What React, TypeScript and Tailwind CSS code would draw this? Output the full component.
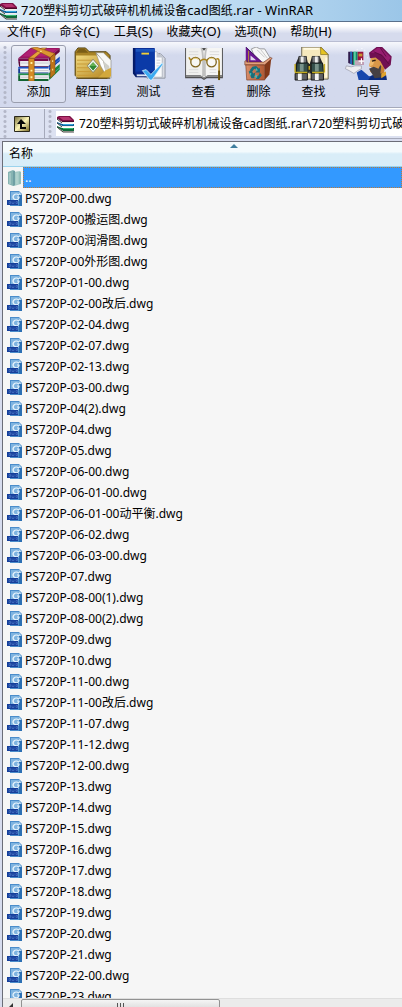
import { Fragment } from "react";

const FOLDER = "720塑料剪切式破碎机机械设备cad图纸";

const files = [
  "00",
  "00搬运图",
  "00润滑图",
  "00外形图",
  "01-00",
  "02-00改后",
  "02-04",
  "02-07",
  "02-13",
  "03-00",
  "04(2)",
  "04",
  "05",
  "06-00",
  "06-01-00",
  "06-01-00动平衡",
  "06-02",
  "06-03-00",
  "07",
  "08-00(1)",
  "08-00(2)",
  "09",
  "10",
  "11-00",
  "11-00改后",
  "11-07",
  "11-12",
  "12-00",
  "13",
  "14",
  "15",
  "16",
  "17",
  "18",
  "19",
  "20",
  "21",
  "22-00",
  "23",
].map((n) => `PS720P-${n}.dwg`);

const menus = ["文件(F)", "命令(C)", "工具(S)", "收藏夹(O)", "选项(N)", "帮助(H)"];

// Chinese runs are set one size below the Latin ones
function Mixed({ text }: { text: string }) {
  return (
    <>
      {text.split(/([\u4e00-\u9fff]+)/).map((part, i) =>
        i % 2 ? (
          <span key={i} className="text-[12px]">{part}</span>
        ) : (
          <Fragment key={i}>{part}</Fragment>
        ),
      )}
    </>
  );
}

function BooksIcon() {
  return (
    <svg viewBox="0 0 18 18" className="h-[18px] w-[18px] shrink-0" aria-hidden="true">
      <path d="M0 2 2 1h11l4 4v2H5L0 4z" fill="#7c1045" />
      <path d="M2 2h10l3 3H6z" fill="#b5346f" />
      <path d="M5 6h12v1H5z" fill="#4d0829" />
      <path d="m1 4 4 3h11v1H5L1 6z" fill="#f1efe9" />
      <path d="m0 7 5 2h12v2H5L0 8z" fill="#10629b" />
      <path d="M6 9h10v1H6z" fill="#36a9dc" />
      <path d="m1 9 4 2h11v1H5l-4-2z" fill="#f1efe9" />
      <path d="m0 11 5 2h12v3H6l-6-4z" fill="#0f6a3b" />
      <path d="M6 13h10v1H6z" fill="#37bb72" />
      <path d="m1 13 5 3h10v1H6l-5-3z" fill="#dcd9d0" />
      <path d="m0 4 5 4M0 8l5 4M0 12l6 5h11" stroke="#161616" fill="none" strokeWidth=".8" />
    </svg>
  );
}

function AddIcon() {
  return (
    <svg viewBox="0 0 44 36" className="h-9 w-11" aria-hidden="true">
      <path d="M0 12 13 1h31L32 12z" fill="#9c1561" />
      <path d="m4 10 9-8h28l-9 8z" fill="#b02173" />
      <path d="m32 12 12-11v4L33 15z" fill="#6d0841" />
      <path d="m33 15 9-8v4l-9 9z" fill="#e3e3e8" />
      <path d="m32 20 12-10v5L33 25z" fill="#1444b5" />
      <path d="m33 25 9-8v3l-9 8z" fill="#d8e4f3" />
      <path d="m32 28 12-10v6L33 35z" fill="#1a8a3c" />
      <path d="M0 12h32v3H0z" fill="#780b4b" />
      <path d="M2 15h30v5H2z" fill="#f2f2f2" />
      <path d="M0 15h2v5h30v1H1z" fill="#5b0839" />
      <path d="M0 21h32v2H0z" fill="#1c53c4" />
      <path d="M2 23h30v4H2z" fill="#f6f6f6" />
      <path d="M0 23h2v4h30v1H0z" fill="#123a91" />
      <path d="M0 28h32v2H0z" fill="#24914a" />
      <path d="M2 30h30v4H2z" fill="#eeeeee" />
      <path d="M0 30h2v4h30v2H0z" fill="#136331" />
      <path d="M3 17h29M3 25h29M3 32h29" stroke="#c5c7cd" />
      <path d="m33 22 11-9M33 31l11-9" stroke="#6fb5e2" opacity=".6" />
      <path d="m11 12 14-11h5L17 12z" fill="#e6a23b" stroke="#7a4510" strokeWidth=".5" />
      <path d="m14 1 5-1 20 7-5 4z" fill="#dc9631" stroke="#7a4510" strokeWidth=".5" />
      <path d="M11 12h6v24h-6z" fill="#d58b24" stroke="#7a4510" strokeWidth=".5" />
      <path d="m34 11 5-4v21l-5 5z" fill="#bd7419" stroke="#7a4510" strokeWidth=".5" />
      <path d="M13 16h2v2h-2zm0 8h2v2h-2zm0 7h2v2h-2zM23 4h2v1h-2zM36 14h1v2h-1zm0 9h1v2h-1z" fill="#fff0a0" />
    </svg>
  );
}

function ExtractIcon() {
  return (
    <svg viewBox="0 0 44 36" className="h-9 w-11" aria-hidden="true">
      <defs>
        <linearGradient id="ex" x1="0" x2="1" y1="0" y2="1">
          <stop offset="0" stopColor="#f2da7e" />
          <stop offset="1" stopColor="#b18423" />
        </linearGradient>
      </defs>
      <path d="M2 5 5 1h8l4 4h18l4 4v21l-3 3H5l-3-3z" fill="#a78225" stroke="#51400f" />
      <path d="M3 6 6 2h6l4 4z" fill="#7a5d16" />
      <path d="M3 9h26l8 6v16l-2 2H5l-2-2z" fill="url(#ex)" />
      <path d="M4 14h18M4 18h16M4 22h14M4 26h15M4 30h22" stroke="#c89a35" />
      <path d="M24 6h8l8 8v19l-6-3-2-14z" fill="#f7f7f5" stroke="#8b8b83" strokeWidth=".7" />
      <path d="m24 6 8 9 4 17-7-12z" fill="#fff" stroke="#77776d" strokeWidth=".5" />
      <path d="m32 15 6 5 2 12-4 1z" fill="#cfcfc8" />
      <path d="m26 33 8-8 6-3v9l-3 2z" fill="#d2a83c" />
      <path d="m15 20 6-7 6 7-6 7z" fill="#f3f5ed" stroke="#5b6250" strokeWidth=".7" />
      <path d="m17 20 4-4 4 4-4 5z" fill="#65b155" />
      <path d="m17 20 4 5 4-5z" fill="#2f8935" />
      <path d="M3 33h36" stroke="#4a380b" />
    </svg>
  );
}

function TestIcon() {
  return (
    <svg viewBox="0 0 44 36" className="h-9 w-11" aria-hidden="true">
      <path d="M20 7h14l5 5v21H20z" fill="#d9dce3" stroke="#8d93a0" />
      <path d="M17 5h13l6 6v21H17z" fill="#f9fafc" stroke="#9ca3b0" strokeWidth=".7" />
      <path d="m30 5 6 6h-6z" fill="#bfc5d1" />
      <path d="M30 14h4M30 17h4M30 20h4" stroke="#c9ccd3" />
      <path d="M5 1h23v30H8l-3-3z" fill="#092a91" />
      <path d="M8 2h20v24H8z" fill="#0b3aa7" />
      <path d="M8 2h20v3H8z" fill="#1b55bd" />
      <path d="M5 1v27l3 4h18v-2H9l-2-3V1z" fill="#051b65" />
      <path d="M9 29h17v2H9z" fill="#dfe5f4" />
      <path d="M14 7h8" stroke="#f0cf38" strokeWidth="2" />
      <path d="m15 25 4-1 5 5L36 17l1 1-12 17h-2z" fill="#3caaf0" stroke="#e4f7ff" strokeWidth=".8" />
    </svg>
  );
}

function ViewIcon() {
  return (
    <svg viewBox="0 0 44 36" className="h-9 w-11" aria-hidden="true">
      <path d="M2 1h40v32H25l-3 2-3-2H2z" fill="#4f4f50" />
      <path d="M3 1h16l3 3v28l-4-2H3z" fill="#f0f0ee" />
      <path d="M41 1H25l-3 3v28l4-2h15z" fill="#f5f5f4" />
      <path d="M19 1c3 4 2 24 2 30M25 1c-3 4-2 24-2 30" stroke="#c0c0bf" fill="none" strokeWidth="2" />
      <path d="M6 5h10M6 8h10M6 24h10M6 27h10M28 5h10M28 8h10M28 24h7M28 27h7" stroke="#dbdbdb" />
      <path d="M3 31h16l3 2 3-2h16" fill="none" stroke="#a4a4a4" />
      <path d="M18 15q4-4 8 0M8 14l-2-3M35 13q3-2 3 3v19" fill="none" stroke="#ad8419" strokeWidth="1.6" />
      <circle cx="13" cy="16" r="5" fill="#fafaf7" fillOpacity=".7" stroke="#80651f" strokeWidth="1.4" />
      <circle cx="30" cy="16" r="5" fill="#fafaf7" fillOpacity=".7" stroke="#80651f" strokeWidth="1.4" />
      <path d="M9 14q3-4 7-1M26 14q3-4 7-1" fill="none" stroke="#e2c258" />
      <path d="M38 25v10" stroke="#68500d" strokeWidth="2" />
    </svg>
  );
}

function DeleteIcon() {
  return (
    <svg viewBox="0 0 44 36" className="h-9 w-11" aria-hidden="true">
      <defs>
        <linearGradient id="bin" x2="1">
          <stop offset="0" stopColor="#d88d69" />
          <stop offset="1" stopColor="#b05833" />
        </linearGradient>
      </defs>
      <path d="m14 2 5-2 4 2h5l6 10-3 5H20z" fill="#f7f7f7" stroke="#777" strokeWidth=".7" />
      <path d="m20 3 8 8M24 3l7 9" stroke="#c6c6c6" />
      <path d="M8 0 25 16H8z" fill="#6a1793" />
      <path d="m13 9 6 5h-6z" fill="#e4daef" />
      <path d="M8 0 25 16" stroke="#3c0859" />
      <path d="M11 4v12" stroke="#b9952b" />
      <path d="m28 17 7-5-2 17-5 6z" fill="#823719" />
      <path d="m7 15 2-1v2h18l7-5 2 1-8 7H7z" fill="#e3a17f" stroke="#5f2817" strokeWidth=".6" />
      <path d="M8 19h20v16H9z" fill="url(#bin)" stroke="#6d3018" strokeWidth=".6" />
      <path d="m15 21 4-1 3 3 1-1v5h-5l2-2-3-2-2 3-3-1zM23 27l2 3-3 4h-3v-3h2zM11 26l3-1 2 3 2-1-1 6h-3z" fill="#176f7b" />
      <path d="m19 22 2 3h-3zM20 29v4l-3-2zM12 27l2 1-1 3z" fill="#49b8b4" />
    </svg>
  );
}

function FindIcon() {
  return (
    <svg viewBox="0 0 44 36" className="h-9 w-11" aria-hidden="true">
      <path d="M9 0h20l8 8v26H9z" fill="#f6e9bd" stroke="#68634d" />
      <path d="m29 0 8 8h-8z" fill="#e6c421" stroke="#7e6b18" strokeWidth=".7" />
      <path d="M11 2h16M35 11v21" stroke="#fffae2" strokeWidth="2" />
      <path d="M6 10h8l2 9v9H2v-9zM20 10h8l4 9v9H17v-9z" fill="#28292c" />
      <path d="M6 10h8v7H6zM20 10h8v7h-8z" fill="#77797c" stroke="#222" strokeWidth=".7" />
      <path d="M8 10h3v7H8zM23 10h3v7h-3z" fill="#ececec" />
      <path d="M4 17h12v10H3zM19 17h12l1 10H19z" fill="#344f4b" stroke="#121818" />
      <path d="M7 18h4v8H7zM23 18h4v8h-4z" fill="#79938b" />
      <path d="M15 18h4v8h-4z" fill="#2a2a20" />
      <path d="M2 28h13v7H2zM19 28h13v7H19z" fill="#5f6164" stroke="#101010" />
      <path d="M5 28h4v7H5zM23 28h4v7h-4z" fill="#f4f4f4" />
      <path d="M2 18v9M17 20v4M33 18v9M2 27h13M20 27h12" stroke="#c6ad20" fill="none" strokeWidth="1.5" />
    </svg>
  );
}

function WizardIcon() {
  return (
    <svg viewBox="0 0 50 36" className="h-9 w-[50px]" aria-hidden="true">
      <path d="M3 5h5v14l-5-2z" fill="#2f1b4c" />
      <path d="M5 5h2v13H5z" fill="#2367bb" />
      <path d="M8 5h5v14H8z" fill="#118866" />
      <path d="M9 5h2v14H9z" fill="#5ccca1" />
      <path d="M13 5h6v14h-6z" fill="#98113f" />
      <path d="M14 7h4v3h-4z" fill="#c59330" />
      <path d="M10 14h9v5h-9z" fill="#c1a8b9" />
      <path d="M17 12v6M14 15h6" stroke="#fff" strokeWidth="1.2" />
      <path d="M1 20q6 2 9 0h7v3l-4 2-4 3-5-3-4-2z" fill="#ededf1" stroke="#8a8b98" strokeWidth=".6" />
      <path d="m12 27 5-3 8 7 7-1 9 5H14z" fill="#1647ad" />
      <path d="m28 30 15-1 1 6H24z" fill="#0a2a7a" />
      <path d="m27 12 7-3 8 8-1 10-9 4-6-5 2-4-3-2z" fill="#d99748" />
      <path d="m27 13 4 2-2 4-4 2z" fill="#efb96b" />
      <path d="m25 23 5-2 5 2 2-4 4 6-2 7-8 1z" fill="#454043" />
      <path d="m28 15 4-1" stroke="#2a1b10" strokeWidth="1.5" />
      <path d="M38 20q4 1 3 7l-4 1z" fill="#c88132" />
      <path d="M26 12 25 6l8-6h6l10 10-1 9-6 5-5-9-5-4z" fill="#701052" />
      <path d="m27 6 7-5h4l10 10-3 5-7-8-6-2z" fill="#971d70" />
      <path d="m30 5 9 4 7 9M37 1l6 9" fill="none" stroke="#54083b" strokeWidth=".8" />
      <path d="m38 28 5-2v4l-5 3z" fill="#dfa22c" />
      <path d="M12 2h1v1h-1zM20 3h1v1h-1zM22 7h1v1h-1zM23 11h1v1h-1zM17 1h1v1h-1z" fill="#fff" />
    </svg>
  );
}

function DwgIcon() {
  return (
    <svg viewBox="0 0 16 16" className="h-4 w-4 shrink-0" aria-hidden="true">
      <path d="M3 0h9l3 3v12H3z" fill="#4b8dcb" />
      <path d="M4 1h8v9H4z" fill="#7fb4e0" />
      <path d="M12 0v3h3v12h-3z" fill="#2b6fb3" />
      <path d="M12 1v3h3z" fill="#b9d8ee" />
      <path d="M12 4q-3-2-5 0t0 4q3 2 5-1V6h-2" fill="none" stroke="#e8f4fc" strokeWidth="1.2" />
      <path d="M0 9h11v5H0z" fill="#163f9b" />
      <path d="M2 10.500h1.500v2H2zm3 0v2h2v-2m2 0h1.500v2H9z" fill="none" stroke="#5580cf" strokeWidth=".6" />
    </svg>
  );
}

function FolderIcon() {
  return (
    <svg viewBox="0 0 16 18" className="h-[18px] w-4 shrink-0" aria-hidden="true">
      <path d="m1 3 5-2 2 1v14l-2 1-5-2z" fill="#86b3b2" />
      <path d="m7 3 6-1 1 1v12l-7 2z" fill="#a5cbc6" />
      <path d="M6 2h2v14l-2 1z" fill="#6f9fa4" />
      <path d="M3 4v11M10 4v11" stroke="#bcd8d4" />
      <path d="M13 3v12" stroke="#7fb0ad" />
    </svg>
  );
}

const tools = [
  { label: "添加", icon: <AddIcon />, active: true },
  { label: "解压到", icon: <ExtractIcon /> },
  { label: "测试", icon: <TestIcon /> },
  { label: "查看", icon: <ViewIcon /> },
  { label: "删除", icon: <DeleteIcon /> },
  { label: "查找", icon: <FindIcon /> },
  { label: "向导", icon: <WizardIcon /> },
];

function Grip() {
  return (
    <span className="w-1 shrink-0 self-stretch bg-[radial-gradient(circle,#b3b7c8_1px,transparent_2px)] bg-[length:4px_5px]" />
  );
}

export default function App() {
  return (
    <div className="flex h-screen flex-col overflow-hidden bg-[#d7dcee] font-['Noto_Sans','Noto_Sans_CJK_SC',sans-serif] text-[13px] leading-5 text-black">
      <header className="flex h-[22px] shrink-0 items-center gap-[3px] border-b border-[#59708b] bg-linear-to-r from-[#dcebf6] via-[#c3dff3] to-[#9bc6e8]">
        <BooksIcon />
        <h1 className="whitespace-nowrap"><Mixed text={`${FOLDER}.rar - WinRAR`} /></h1>
      </header>

      <nav className="flex h-5 shrink-0 items-center gap-[14px] border-b border-[#b9bdd2] bg-linear-to-b from-white from-20% to-[#d6dbed] to-60% pl-[7px]">
        {menus.map((m) => (
          <button key={m} type="button" className="whitespace-nowrap"><Mixed text={m} /></button>
        ))}
      </nav>

      <div className="flex h-[66px] shrink-0 border-b border-[#a5a9ba] bg-linear-to-b from-[#f7f8fc] to-[#d3d9ed] to-20% py-[3px] pl-[3px]">
        <Grip />
        <div className="flex pl-1">
          {tools.map((t) => (
            <button
              key={t.label}
              type="button"
              className={`flex h-[58px] w-[55px] shrink-0 flex-col items-center rounded-[3px] border pt-px text-[12px] whitespace-nowrap ${t.active ? "border-[#9a9eae] bg-white/20" : "border-transparent"}`}
            >
              {t.icon}
              <span className="mt-px">{t.label}</span>
            </button>
          ))}
        </div>
      </div>

      <div className="flex h-[31px] shrink-0 border-y border-[#a5a9ba] border-t-white bg-[#dce1f1] pl-[3px]">
        <Grip />
        <button type="button" aria-label="Up" className="flex w-[38px] shrink-0 items-center justify-center border-r border-[#a5a9ba] pr-2">
          <svg viewBox="0 0 16 16" className="h-4 w-4" aria-hidden="true">
            <defs>
              <linearGradient id="up" x2="1" y2="1">
                <stop offset="0" stopColor="#756d38" />
                <stop offset=".5" stopColor="#fbf4b7" />
                <stop offset="1" stopColor="#746520" />
              </linearGradient>
            </defs>
            <path d="M.5.5h15v15H.5z" fill="url(#up)" stroke="#29271b" />
            <path d="m7 3 5 5H8v3h4v2H6V8H3z" fill="#080808" />
          </svg>
        </button>
        <span className="flex pl-[3px]"><Grip /></span>
        <div className="my-[2px] ml-1 flex min-w-0 flex-1 items-center gap-1 bg-white pl-px">
          <BooksIcon />
          <input
            type="text"
            aria-label="Path"
            defaultValue={`${FOLDER}.rar\\${FOLDER}`}
            className="min-w-0 flex-1 bg-transparent text-[12px] outline-none"
          />
        </div>
      </div>

      <main className="mt-[2px] ml-[2px] flex min-h-0 flex-1 flex-col border-t border-l border-[#6b6d78] bg-[#f6f6f6]">
        <div className="relative flex h-[25px] shrink-0 items-center border-b border-[#9cd3ed] bg-linear-to-b from-[#f3fafd] from-40% to-[#d9edf8] to-50% pl-[6px] text-[12px]">
          <span>名称</span>
          <svg viewBox="0 0 8 4" className="absolute top-[2px] left-[227px] h-1 w-2" aria-hidden="true">
            <path d="m0 4 4-4 4 4z" fill="#3f7f9f" />
          </svg>
        </div>

        <ul className="min-h-0 flex-1 overflow-hidden text-[12px]">
          <li className="flex h-[21px] items-center pl-1">
            <FolderIcon />
            <span className="h-full flex-1 border border-dotted border-[#b8793f] bg-[#3399ff] pl-px leading-[19px] text-white">..</span>
          </li>
          {files.map((f) => (
            <li key={f} className="flex h-[21px] items-center gap-[2px] pl-1 whitespace-nowrap">
              <DwgIcon />
              <span>{f}</span>
            </li>
          ))}
        </ul>

        <div className="flex h-[9px] shrink-0 overflow-hidden border-t border-[#dedede] bg-[#ebebeb]">
          <svg viewBox="0 0 18 9" className="h-[9px] w-[18px] shrink-0" aria-hidden="true">
            <path d="m10 4-4 4 4 4z" fill="#333" />
          </svg>
          <div className="flex h-4 w-[199px] justify-center rounded-t-[2px] border border-[#929292] bg-linear-to-b from-[#f5f5f5] to-[#cfcfcf]">
            <span className="mt-[3px] h-2 w-2 bg-[repeating-linear-gradient(90deg,#555_0_1px,transparent_1px_3px)]" />
          </div>
        </div>
      </main>
    </div>
  );
}
